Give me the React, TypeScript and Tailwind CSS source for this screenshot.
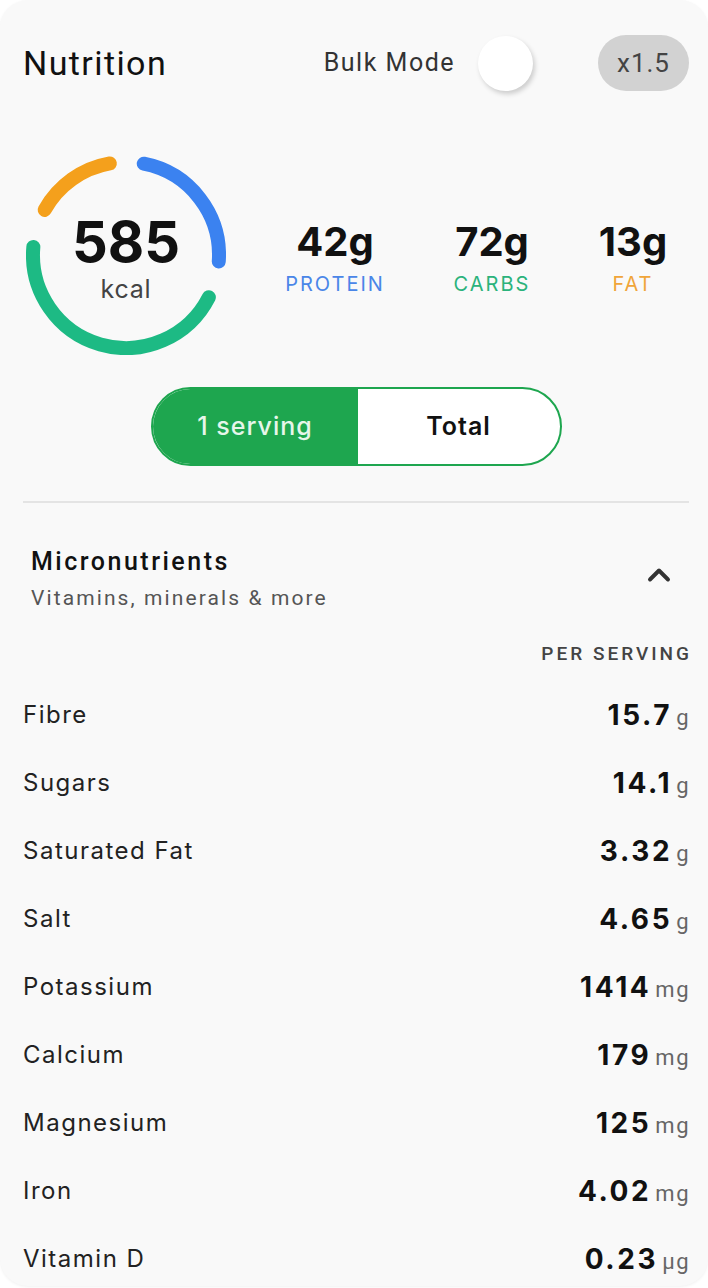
import { ChevronUp } from "lucide-react";

type Micro = { name: string; value: string; unit: string };

const micros: Micro[] = [
  { name: "Fibre", value: "15.7", unit: "g" },
  { name: "Sugars", value: "14.1", unit: "g" },
  { name: "Saturated Fat", value: "3.32", unit: "g" },
  { name: "Salt", value: "4.65", unit: "g" },
  { name: "Potassium", value: "1414", unit: "mg" },
  { name: "Calcium", value: "179", unit: "mg" },
  { name: "Magnesium", value: "125", unit: "mg" },
  { name: "Iron", value: "4.02", unit: "mg" },
  { name: "Vitamin D", value: "0.23", unit: "µg" },
];

// degrees clockwise from 12 o'clock
function arc(cx: number, cy: number, r: number, a: number, b: number) {
  const p = (deg: number) => {
    const t = (deg * Math.PI) / 180;
    return `${(cx + r * Math.sin(t)).toFixed(2)} ${(cy - r * Math.cos(t)).toFixed(2)}`;
  };
  const large = b - a > 180 ? 1 : 0;
  return `M ${p(a)} A ${r} ${r} 0 ${large} 1 ${p(b)}`;
}

function CalorieRing() {
  return (
    <div className="relative w-[200px] h-[200px] shrink-0">
      <svg width="200" height="200" viewBox="0 0 200 200">
        <path d={arc(100, 100, 93, 11, 94)} fill="none" stroke="#3b82f0" strokeWidth="14" strokeLinecap="round" />
        <path d={arc(100, 100, 93, 117, 275)} fill="none" stroke="#1dba84" strokeWidth="14" strokeLinecap="round" />
        <path d={arc(100, 100, 93, 299, 350)} fill="none" stroke="#f4a01c" strokeWidth="14" strokeLinecap="round" />
      </svg>
      <div className="absolute inset-0 flex flex-col items-center justify-center pt-[8px]">
        <span className="font-['Inter',sans-serif] text-[56px] leading-[56px] font-bold text-[#111]">585</span>
        <span className="font-['Inter',sans-serif] text-[25px] leading-[30px] text-[#444] tracking-[0.8px] mt-[4px]">kcal</span>
      </div>
    </div>
  );
}

function Macro({ amount, label, color, width }: { amount: string; label: string; color: string; width: string }) {
  return (
    <div className={`${width} flex flex-col items-center`}>
      <span className="font-['Inter',sans-serif] text-[40px] leading-[44px] font-bold text-[#111]">{amount}</span>
      <span className={`font-['Inter',sans-serif] text-[20px] leading-[24px] tracking-[2px] mt-[8px] ${color}`}>{label}</span>
    </div>
  );
}

export default function App() {
  return (
    <div className="w-[708px] min-h-[1288px] bg-white">
      <div className="h-[1286px] overflow-hidden rounded-[28px] bg-[#f9f9f9] shadow-[0_1px_3px_rgba(0,0,0,0.06)] pl-[23px] pr-[19px] pt-[35px]">
        {/* header */}
        <div className="flex items-center h-[56px]">
          <h1 className="font-['Roboto',sans-serif] text-[34px] tracking-[1.4px] text-[#111] flex-1">Nutrition</h1>
          <span className="font-['Roboto',sans-serif] text-[25px] text-[#333] tracking-[1.5px]">Bulk Mode</span>
          <div className="ml-[23px] w-[82px] h-[56px] flex items-center">
            <div className="w-[55px] h-[55px] rounded-full bg-white shadow-[2px_3px_5px_rgba(0,0,0,0.18)]" />
          </div>
          <div className="ml-[38px] w-[91px] h-[56px] rounded-full bg-[#d2d2d2] flex items-center justify-center">
            <span className="font-['Roboto',sans-serif] text-[26px] tracking-[1px] text-[#444]">x1.5</span>
          </div>
        </div>

        {/* calories + macros */}
        <div className="flex items-center mt-[64px] ml-[3px]">
          <CalorieRing />
          <div className="flex ml-[34px] pt-[6px]">
            <Macro amount="42g" label="PROTEIN" color="text-[#4a86e8]" width="w-[150px]" />
            <Macro amount="72g" label="CARBS" color="text-[#2bb37c]" width="w-[164px]" />
            <Macro amount="13g" label="FAT" color="text-[#f0a53a]" width="w-[118px]" />
          </div>
        </div>

        {/* serving switch */}
        <div className="flex justify-center mt-[32px]">
          <div className="w-[411px] h-[79px] rounded-full border-2 border-[#1ea64f] overflow-hidden flex bg-white">
            <div className="w-[205px] bg-[#1ea64f] flex items-center justify-center">
              <span className="font-['Inter',sans-serif] text-[25px] font-medium text-[#e6f6ea] tracking-[1px]">1 serving</span>
            </div>
            <div className="flex-1 flex items-center justify-center">
              <span className="font-['Inter',sans-serif] text-[25px] font-semibold text-[#111] tracking-[1px]">Total</span>
            </div>
          </div>
        </div>

        <div className="h-[2px] bg-[#e4e4e4] mt-[35px]" />

        {/* micronutrients */}
        <div className="flex items-center pl-[8px] pr-[12px] mt-[44px]">
          <div className="flex-1">
            <div className="font-['Roboto',sans-serif] text-[25px] leading-[30px] font-medium text-[#111] tracking-[2.5px]">Micronutrients</div>
            <div className="font-['Roboto',sans-serif] text-[21px] leading-[26px] text-[#555] tracking-[2.1px] mt-[8px]">
              Vitamins, minerals &amp; more
            </div>
          </div>
          <ChevronUp size={36} strokeWidth={2.6} className="text-[#333] -mt-[8px]" />
        </div>

        <div className="text-right font-['Roboto',sans-serif] text-[19px] leading-[24px] font-medium text-[#444] tracking-[3px] -mr-[3px] mt-[31px]">
          PER SERVING
        </div>

        <div className="mt-[15px]">
          {micros.map((m) => (
            <div key={m.name} className="h-[68px] flex items-center justify-between">
              <span className="font-['Inter',sans-serif] text-[24px] text-[#222] tracking-[1.5px]">{m.name}</span>
              <span className="flex items-baseline">
                <span className="font-['Inter',sans-serif] text-[28px] font-bold text-[#111] tracking-[2.6px]">{m.value}</span>
                <span className="font-['Roboto',sans-serif] text-[22px] text-[#666] tracking-[1.5px] ml-[4px] -mr-[1px]">{m.unit}</span>
              </span>
            </div>
          ))}
        </div>
      </div>
    </div>
  );
}
